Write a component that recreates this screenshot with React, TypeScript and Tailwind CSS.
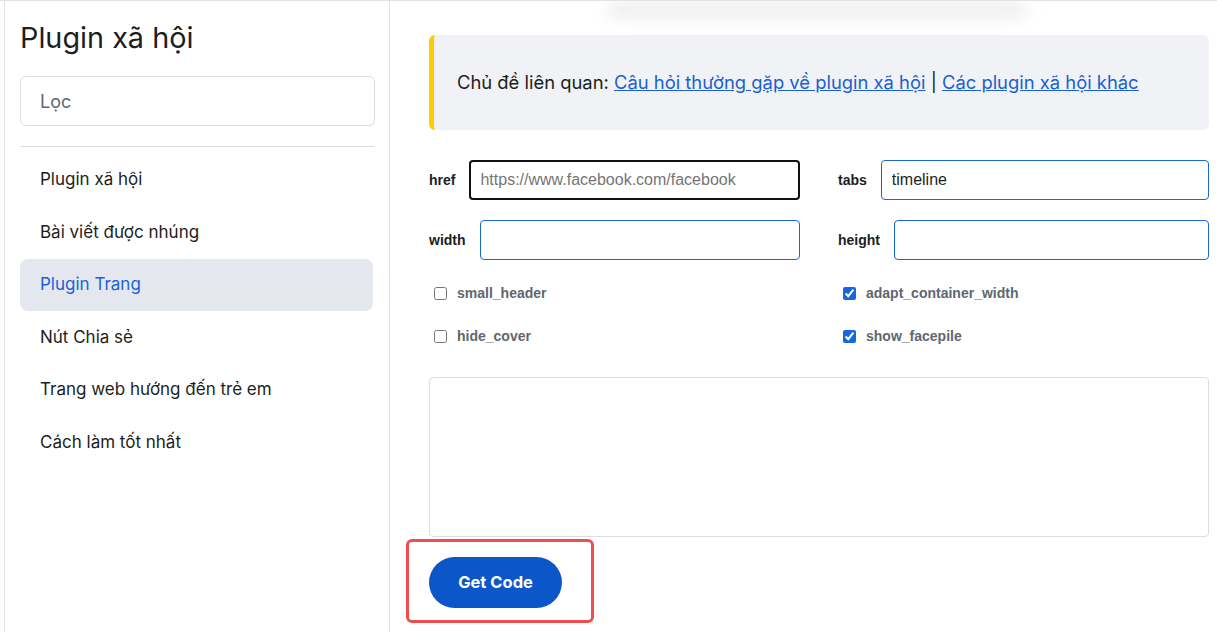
import { useState } from "react";

const navItems = [
  "Plugin xã hội",
  "Bài viết được nhúng",
  "Plugin Trang",
  "Nút Chia sẻ",
  "Trang web hướng đến trẻ em",
  "Cách làm tốt nhất",
];

function Field({
  label,
  value,
  placeholder,
  focused,
}: {
  label: string;
  value?: string;
  placeholder?: string;
  focused?: boolean;
}) {
  return (
    <div className="flex items-center gap-[14px]">
      <label className="text-[14px] font-bold text-[#1c1e21] font-['Liberation_Sans',Arial,sans-serif]">
        {label}
      </label>
      <input
        type="text"
        defaultValue={value}
        placeholder={placeholder}
        className={
          focused
            ? "h-[40px] flex-1 min-w-0 rounded-[4px] border-2 border-[#111] px-[9px] text-[16px] text-[#1c1e21] placeholder:text-[#757575] outline-none font-['Liberation_Sans',Arial,sans-serif]"
            : "h-[40px] flex-1 min-w-0 rounded-[4px] border border-[#1a66d2] px-[10px] text-[16px] text-[#1c1e21] placeholder:text-[#757575] outline-none font-['Liberation_Sans',Arial,sans-serif]"
        }
      />
    </div>
  );
}

function Check({ label, checked }: { label: string; checked?: boolean }) {
  return (
    <label className="flex h-[20px] items-center pl-[5px]">
      <input
        type="checkbox"
        defaultChecked={checked}
        className="h-[13px] w-[13px] accent-[#1567e0]"
      />
      <span className="ml-[10px] text-[14px] font-bold text-[#606770] font-['Liberation_Sans',Arial,sans-serif]">
        {label}
      </span>
    </label>
  );
}

export default function App() {
  const [active] = useState("Plugin Trang");

  return (
    <div className="flex h-[632px] w-full overflow-hidden border-t border-[#e3e3e3] bg-white pl-[4px] font-['Inter','Noto_Sans',sans-serif] text-[#1c1e21]">
      {/* Sidebar */}
      <aside className="flex w-[386px] shrink-0 flex-col border-x border-[#e3e3e3]">
        <h1 className="pl-[15px] pt-[20px] text-[28.8px] leading-[34px] font-normal">
          Plugin xã hội
        </h1>
        <div className="mx-[15px] mt-[21px]">
          <input
            type="text"
            placeholder="Lọc"
            className="h-[50px] w-[355px] rounded-[6px] border border-[#dadde1] px-[19px] text-[18px] placeholder:text-[#606770] outline-none"
          />
        </div>
        <div className="mx-[15px] mt-[20px] border-t border-[#dadde1]" />
        <nav className="mx-[15px] mt-[6.5px] w-[353px]">
          {navItems.map((item) => (
            <div
              key={item}
              className={
                item === active
                  ? "flex h-[52.6px] items-center rounded-[8px] bg-[#e4e8ee] px-[20px] text-[17px] text-[#1a62d4]"
                  : "flex h-[52.6px] items-center px-[20px] text-[17px] text-[#1c1e21]"
              }
            >
              {item}
            </div>
          ))}
        </nav>
      </aside>

      {/* Main content */}
      <main className="flex-1 pl-[39px] pr-[8px]">
        <div className="mx-auto mt-[2px] h-[14px] w-[420px] -translate-x-[2px] rounded-full bg-[#ebebeb] blur-[8px]" />

        <div className="mt-[18px] flex h-[95px] items-center rounded-[6px] border-l-[5px] border-[#ffcc00] bg-[#f0f2f5] pl-[23px] text-[18.4px]">
          <p>
            Chủ đề liên quan:{" "}
            <a href="#" className="text-[#1a5fd3] underline">
              Câu hỏi thường gặp về plugin xã hội
            </a>{" "}
            |{" "}
            <a href="#" className="text-[#1a5fd3] underline">
              Các plugin xã hội khác
            </a>
          </p>
        </div>

        {/* Plugin settings form */}
        <div className="mt-[30px] grid grid-cols-2 gap-x-[38px] gap-y-[20px]">
          <Field label="href" placeholder="https://www.facebook.com/facebook" focused />
          <Field label="tabs" value="timeline" />
          <Field label="width" />
          <Field label="height" />
        </div>

        <div className="mt-[23px] grid grid-cols-2 gap-x-[38px] gap-y-[23px]">
          <Check label="small_header" />
          <Check label="adapt_container_width" checked />
          <Check label="hide_cover" />
          <Check label="show_facepile" checked />
        </div>

        <textarea className="mt-[31px] block h-[160px] w-full resize-none rounded-[4px] border border-[#dadde1] outline-none" />

        <div className="-ml-[23px] mt-[2px] inline-block rounded-[6px] border-[3px] border-[#f04e4e] pb-[12px] pl-[20px] pr-[29px] pt-[15px]">
          <button className="h-[51px] w-[133px] rounded-full bg-[#0b57c9] text-[16.5px] font-bold text-white">
            Get Code
          </button>
        </div>
      </main>
    </div>
  );
}
